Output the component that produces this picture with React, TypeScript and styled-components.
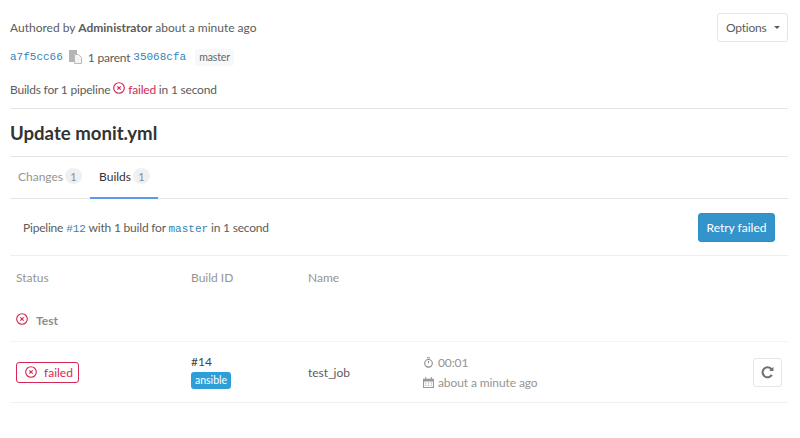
import React from 'react';
import styled, {createGlobalStyle} from 'styled-components';

const GlobalStyle = createGlobalStyle`
  html, body {
    margin: 0;
    background: #fff;
  }
  body {
    font-family: 'Lato', 'Noto Sans', sans-serif;
    font-size: 12px;
    color: #5c5c5c;
  }
  * {
    box-sizing: border-box;
  }
`;

const Page = styled.div`
  width: 800px;
  height: 438px;
  padding: 13px 12px 0 10px;
  overflow: hidden;
`;

const InfoBlock = styled.div`
  height: 96px;
  border-bottom: 1px solid #e5e5e5;
`;

const AuthorRow = styled.div`
  display: flex;
  justify-content: space-between;
  align-items: center;
  height: 29px;
`;

const Options = styled.button`
  display: flex;
  align-items: center;
  gap: 7px;
  width: 71px;
  height: 29px;
  padding: 0 0 0 8px;
  font: inherit;
  letter-spacing: -0.2px;
  color: #5c5c5c;
  background: #fff;
  border: 1px solid #e5e5e5;
  border-radius: 3px;
`;

const Caret = styled.span`
  width: 0;
  height: 0;
  border-left: 3px solid transparent;
  border-right: 3px solid transparent;
  border-top: 3px solid #5c5c5c;
`;

const CommitRow = styled.div`
  display: flex;
  align-items: center;
  height: 20px;
  margin-top: 5px;
`;

const Sha = styled.a`
  font-family: 'Liberation Mono', monospace;
  font-size: 11px;
  letter-spacing: 0;
  color: #3084bb;
`;

const CopyIcon = styled.svg`
  width: 13px;
  height: 14px;
  margin: 0 6px;
`;

const Parent = styled.span`
  margin-right: 3px;
  letter-spacing: -0.2px;
`;

const BranchTag = styled.span`
  height: 17px;
  margin-left: 9px;
  padding: 0 4px;
  font-size: 10.5px;
  line-height: 17px;
  letter-spacing: -0.1px;
  color: #666;
  background: #f6f8fa;
  border-radius: 3px;
`;

const PipelineLine = styled.div`
  display: flex;
  align-items: center;
  gap: 3px;
  height: 20px;
  margin-top: 12px;
  letter-spacing: -0.2px;
`;

const RaisedIcon = styled.span`
  display: flex;
  margin-top: -3px;
`;

const FailedText = styled.span`
  color: #d22852;
`;

const Title = styled.h1`
  height: 48px;
  margin: 0;
  font-size: 18.6px;
  font-weight: 700;
  line-height: 48px;
  color: #333;
  border-bottom: 1px solid #e5e5e5;
`;

const Tabs = styled.div`
  display: flex;
  height: 42px;
  border-bottom: 1px solid #e5e5e5;
`;

const Tab = styled.div<{$active?: boolean}>`
  display: flex;
  align-items: center;
  gap: 2px;
  height: 42px;
  padding: 0 8px 2px 9px;
  color: ${p => (p.$active ? '#333' : '#959494')};
  border-bottom: 2px solid ${p => (p.$active ? '#5b99ea' : 'transparent')};

  &:first-child {
    padding-left: 8px;
  }
`;

const Count = styled.span`
  width: 17px;
  height: 16px;
  font-size: 11px;
  line-height: 17px;
  text-align: center;
  color: #7f8fa4;
  background: #f0f0f0;
  border-radius: 50%;
`;

const PipelineBar = styled.div`
  display: flex;
  justify-content: space-between;
  align-items: center;
  height: 57px;
  padding: 0 13px;
  letter-spacing: -0.2px;
  border-bottom: 1px solid #eee;
`;

const Retry = styled.button`
  width: 77px;
  height: 29px;
  padding: 0;
  font: inherit;
  color: #fff;
  background: #3394cc;
  border: 1px solid #2f8ec6;
  border-radius: 3px;
`;

const BarCode = styled.code`
  font-family: 'Liberation Mono', monospace;
  font-size: 11px;
  letter-spacing: 0;
  color: #3084bb;
`;

const JobGrid = styled.div`
  display: grid;
  grid-template-columns: 175px 117px 115px 1fr;
  padding-left: 6px;
`;

const HeadCell = styled.div`
  height: 44px;
  line-height: 44px;
  color: #959494;
`;

const StageRow = styled.div`
  display: flex;
  align-items: center;
  gap: 8px;
  height: 42px;
  padding-left: 6px;
  font-weight: 700;
  color: #8c8c8c;
  border-bottom: 1px solid #f4f4f4;
`;

const BuildRow = styled(JobGrid)`
  align-items: center;
  height: 61px;
  padding-right: 6px;
  border-bottom: 1px solid #f0f0f0;
`;

const FailedBadge = styled.span`
  display: flex;
  align-items: center;
  gap: 7px;
  width: 63px;
  height: 21px;
  padding-left: 8px;
  color: #d22852;
  border: 1px solid #d22852;
  border-radius: 3px;
`;

const BuildId = styled.div`
  display: flex;
  flex-direction: column;
  align-items: flex-start;
  gap: 3px;
  margin-top: -1px;
  color: #444;
`;

const Label = styled.span`
  height: 17px;
  padding: 0 4px;
  font-size: 10.5px;
  line-height: 17px;
  color: #fff;
  background: #2d9fd8;
  border-radius: 3px;
`;

const BuildEnd = styled.div`
  display: flex;
  justify-content: space-between;
  align-items: center;
`;

const Times = styled.div`
  display: flex;
  flex-direction: column;
  gap: 4px;
  letter-spacing: -0.1px;
  color: #959494;
`;

const TimeLine = styled.div`
  display: flex;
  align-items: center;
  gap: 4px;
  height: 16px;
`;

const RefreshButton = styled.button`
  display: flex;
  align-items: center;
  justify-content: center;
  width: 29px;
  height: 29px;
  padding: 0;
  background: #fff;
  border: 1px solid #e5e5e5;
  border-radius: 3px;
`;

const StatusFailed: React.FC = () => (
  <svg width="12" height="12" viewBox="0 0 14 14" fill="none" stroke="#d22852">
    <circle cx="7" cy="7" r="6.2" strokeWidth="1.3"/>
    <path d="M5 5l4 4M9 5l-4 4" strokeWidth="1.3"/>
  </svg>
);

const App: React.FC = () => {
  return (
    <Page>
      <GlobalStyle/>
      <InfoBlock>
        <AuthorRow>
          <span>Authored by <b>Administrator</b> about a minute ago</span>
          <Options>Options <Caret/></Options>
        </AuthorRow>
        <CommitRow>
          <Sha>a7f5cc66</Sha>
          <CopyIcon viewBox="0 0 13 14">
            <path d="M0 0h8v4H5v8H0z" fill="#b4b4b4"/>
            <path d="M5.500 4.500h4l3 3v6h-7z" fill="#f4f4f4" stroke="#bbb"/>
          </CopyIcon>
          <Parent>1 parent</Parent>
          <Sha>35068cfa</Sha>
          <BranchTag>master</BranchTag>
        </CommitRow>
        <PipelineLine>
          Builds for 1 pipeline
          <RaisedIcon><StatusFailed/></RaisedIcon>
          <span><FailedText>failed</FailedText> in 1 second</span>
        </PipelineLine>
      </InfoBlock>
      <Title>Update monit.yml</Title>
      <Tabs>
        <Tab>Changes <Count>1</Count></Tab>
        <Tab $active>Builds <Count>1</Count></Tab>
      </Tabs>
      <PipelineBar>
        <span>Pipeline <BarCode>#12</BarCode> with 1 build for <BarCode>master</BarCode> in 1 second</span>
        <Retry>Retry failed</Retry>
      </PipelineBar>
      <JobGrid>
        <HeadCell>Status</HeadCell>
        <HeadCell>Build ID</HeadCell>
        <HeadCell>Name</HeadCell>
      </JobGrid>
      <StageRow>
        <RaisedIcon><StatusFailed/></RaisedIcon>
        Test
      </StageRow>
      <BuildRow>
        <div>
          <FailedBadge><StatusFailed/> failed</FailedBadge>
        </div>
        <BuildId>
          #14
          <Label>ansible</Label>
        </BuildId>
        <div>test_job</div>
        <BuildEnd>
          <Times>
            <TimeLine>
              <svg width="11" height="11" viewBox="0 0 11 11" fill="none" stroke="#888">
                <circle cx="5.500" cy="6.300" r="3.800" strokeWidth="1.100"/>
                <path d="M5.500 6.300V4M4 .8h3" strokeWidth="1.100"/>
              </svg>
              00:01
            </TimeLine>
            <TimeLine>
              <svg width="11" height="11" viewBox="0 0 10 10" fill="#999">
                <path d="M0 1.500h10V10H0zM1 4v5h8V4z"/>
                <path d="M2 0h1v2H2zM7 0h1v2H7zM2 5h1v1H2zM4.500 5h1v1h-1zM7 5h1v1H7zM2 7h1v1H2zM4.500 7h1v1h-1zM7 7h1v1H7z"/>
              </svg>
              about a minute ago
            </TimeLine>
          </Times>
          <RefreshButton>
            <svg width="13" height="13" viewBox="0 0 12 12" fill="none" stroke="#707070" strokeWidth="1.900">
              <path d="M10 8.200A4.600 4.600 0 1 1 9.700 3"/>
              <path d="M11.500 .6v4H7.500z" fill="#707070" stroke="none"/>
            </svg>
          </RefreshButton>
        </BuildEnd>
      </BuildRow>
    </Page>
  );
};

export default App;
